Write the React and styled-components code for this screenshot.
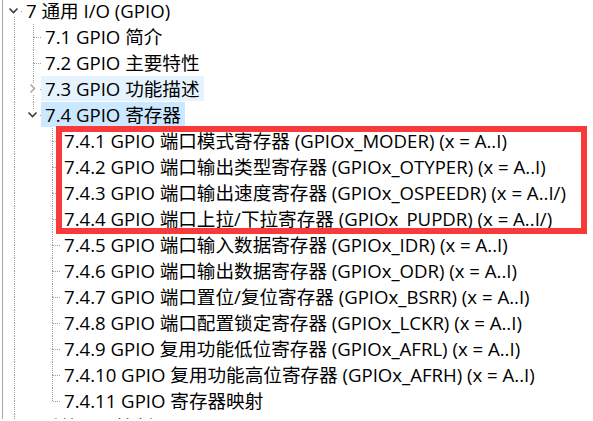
import styled, { createGlobalStyle } from "styled-components";

const GlobalStyle = createGlobalStyle`
  html, body {
    margin: 0;
    padding: 0;
    background: #ffffff;
    overflow: hidden;
  }
`;

const tree = [
  {
    label: "7 通用 I/O (GPIO)",
    open: true,
    children: [
      { label: "7.1 GPIO 简介" },
      { label: "7.2 GPIO 主要特性" },
      { label: "7.3 GPIO 功能描述", collapsed: true, state: "hover" },
      {
        label: "7.4 GPIO 寄存器",
        open: true,
        state: "selected",
        children: [
          { label: "7.4.1 GPIO 端口模式寄存器 (GPIOx_MODER) (x = A..I)", mark: true },
          { label: "7.4.2 GPIO 端口输出类型寄存器 (GPIOx_OTYPER) (x = A..I)", mark: true },
          { label: "7.4.3 GPIO 端口输出速度寄存器 (GPIOx_OSPEEDR) (x = A..I/)", mark: true },
          { label: "7.4.4 GPIO 端口上拉/下拉寄存器 (GPIOx_PUPDR) (x = A..I/)", mark: true },
          { label: "7.4.5 GPIO 端口输入数据寄存器 (GPIOx_IDR) (x = A..I)" },
          { label: "7.4.6 GPIO 端口输出数据寄存器 (GPIOx_ODR) (x = A..I)" },
          { label: "7.4.7 GPIO 端口置位/复位寄存器 (GPIOx_BSRR) (x = A..I)" },
          { label: "7.4.8 GPIO 端口配置锁定寄存器 (GPIOx_LCKR) (x = A..I)" },
          { label: "7.4.9 GPIO 复用功能低位寄存器 (GPIOx_AFRL) (x = A..I)" },
          { label: "7.4.10 GPIO 复用功能高位寄存器 (GPIOx_AFRH) (x = A..I)" },
          { label: "7.4.11 GPIO 寄存器映射" },
        ],
      },
    ],
  },
  { label: "8 系统配置控制器 (SYSCFG)", collapsed: true },
];

// turn the tree into rows, each with the guide cells it needs
function flatten(nodes, depth = 0, hasNext = [], out = []) {
  nodes.forEach((node, i) => {
    const isLast = i === nodes.length - 1;
    const guides = hasNext.map((next) => ({ up: next, down: next }));
    const chevron = node.open ? "down" : node.collapsed ? "right" : null;
    guides.push({
      up: !(depth === 0 && i === 0),
      down: !isLast,
      across: true,
      chevron,
    });
    out.push({ label: node.label, state: node.state, mark: node.mark, guides });
    if (node.open && node.children) {
      flatten(node.children, depth + 1, [...hasNext, !isLast], out);
    }
  });
  return out;
}

const rows = flatten(tree);

const LINE = "#a0a0a0";
const X = 10.5;
const CY = 13;

function Guide({ up, down, across, chevron }) {
  return (
    <GuideSvg width="19" height="26" viewBox="0 0 19 26">
      {up && (
        <line x1={X} y1={0} x2={X} y2={chevron ? CY - 5 : CY} stroke={LINE} strokeDasharray="1 1" />
      )}
      {down && (
        <line x1={X} y1={chevron ? CY + 6 : CY} x2={X} y2={26} stroke={LINE} strokeDasharray="1 1" />
      )}
      {across && (
        <line x1={chevron ? 17 : 11} y1={CY + 0.5} x2={19} y2={CY + 0.5} stroke={LINE} strokeDasharray="1 1" />
      )}
      {chevron === "down" && (
        <path d="M5.5 10.5 L9.5 14.5 L13.5 10.5" fill="none" stroke="#3c3c3c" strokeWidth="1.6" />
      )}
      {chevron === "right" && (
        <path d="M7.5 8.5 L11.5 12.5 L7.5 16.5" fill="none" stroke="#a8a8a8" strokeWidth="1.6" />
      )}
    </GuideSvg>
  );
}

function Row({ row }) {
  return (
    <RowBox>
      {row.guides.map((g, i) => (
        <Guide key={i} {...g} />
      ))}
      <Label $state={row.state}>{row.label}</Label>
    </RowBox>
  );
}

export default function App() {
  const items = [];
  let marked = [];
  rows.forEach((row, i) => {
    if (row.mark) {
      marked.push(<Row key={i} row={row} />);
      return;
    }
    if (marked.length) {
      items.push(<Marked key={"m" + i}>{marked}</Marked>);
      marked = [];
    }
    items.push(<Row key={i} row={row} />);
  });

  return (
    <>
      <GlobalStyle />
      <TreePane>
        <TreeList>{items}</TreeList>
      </TreePane>
    </>
  );
}

const TreePane = styled.div`
  margin-left: 2px;
  height: 421px;
  border-left: 1px solid #a8a8a8;
  padding-left: 1px;
  font-family: "Open Sans", "Noto Sans CJK SC", sans-serif;
  font-size: 18.6px;
  color: #000000;
`;

const TreeList = styled.div`
  margin-top: -2px;
  display: flex;
  flex-direction: column;
`;

const RowBox = styled.div`
  display: flex;
  align-items: flex-start;
  height: 26px;
  white-space: nowrap;
`;

const GuideSvg = styled.svg`
  flex: none;
  display: block;
`;

const Label = styled.span`
  box-sizing: border-box;
  display: inline-flex;
  align-items: center;
  height: 25px;
  margin-left: -1px;
  padding: 0 4px 2px;
  background: ${(p) =>
    p.$state === "selected" ? "#cce8ff" : p.$state === "hover" ? "#e5f3ff" : "transparent"};
`;

const Marked = styled.div`
  position: relative;

  &::after {
    content: "";
    position: absolute;
    top: -2px;
    bottom: -2px;
    left: 52px;
    right: 6px;
    border: 6px solid #f93a3a;
    pointer-events: none;
  }
`;
